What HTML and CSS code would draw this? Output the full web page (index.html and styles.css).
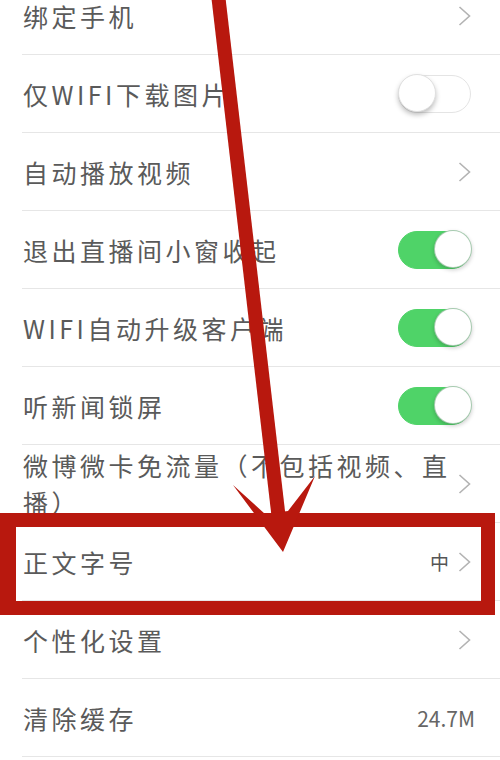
FILE: index.html
```html
<!DOCTYPE html>
<html lang="zh-CN">
<head>
<meta charset="utf-8">
<title>设置</title>
<link rel="stylesheet" href="styles.css">
</head>
<body>
<div class="screen">
  <ul class="list">
    <li class="row"><span class="label">绑定手机</span><svg class="chev" viewBox="0 0 13 20"><polyline points="1.5,1 11.5,10 1.5,19"/></svg></li>
    <li class="row"><span class="label">仅WIFI下载图片</span><span class="toggle"><span class="knob"></span></span></li>
    <li class="row"><span class="label">自动播放视频</span><svg class="chev" viewBox="0 0 13 20"><polyline points="1.5,1 11.5,10 1.5,19"/></svg></li>
    <li class="row"><span class="label">退出直播间小窗收起</span><span class="toggle on"><span class="knob"></span></span></li>
    <li class="row"><span class="label">WIFI自动升级客户端</span><span class="toggle on"><span class="knob"></span></span></li>
    <li class="row"><span class="label">听新闻锁屏</span><span class="toggle on"><span class="knob"></span></span></li>
    <li class="row"><span class="label wrap">微博微卡免流量（不包括视频、直播）</span><svg class="chev" viewBox="0 0 13 20"><polyline points="1.5,1 11.5,10 1.5,19"/></svg></li>
    <li class="row"><span class="label">正文字号</span><span class="value">中</span><svg class="chev" viewBox="0 0 13 20"><polyline points="1.5,1 11.5,10 1.5,19"/></svg></li>
    <li class="row"><span class="label">个性化设置</span><svg class="chev" viewBox="0 0 13 20"><polyline points="1.5,1 11.5,10 1.5,19"/></svg></li>
    <li class="row"><span class="label">清除缓存</span><span class="value size">24.7M</span></li>
  </ul>
  <div class="highlight"></div>
  <svg class="arrow" viewBox="0 0 500 760">
    <line x1="218" y1="-6" x2="279" y2="520"/>
    <polygon points="283,552 233,485 265,514 288,511 315,476"/>
  </svg>
</div>
</body>
</html>
```

FILE: styles.css
```css
html, body {
  margin: 0;
  padding: 0;
  background: #ffffff;
}

.screen {
  position: relative;
  width: 500px;
  height: 760px;
  overflow: hidden;
  background: #ffffff;
  font-family: "Noto Sans CJK SC", "Noto Sans", sans-serif;
}

.list {
  list-style: none;
  margin: -23px 0 0 0;
  padding: 0;
}

.row {
  box-sizing: border-box;
  height: 78px;
  margin-left: 22px;
  padding: 0 29px 0 1px;
  display: flex;
  align-items: center;
  border-bottom: 1px solid #e6e6e6;
}

.label {
  flex: 1;
  min-width: 0;
  font-size: 25px;
  letter-spacing: 3.5px;
  line-height: 28px;
  color: #5a5a5a;
  white-space: nowrap;
}

.label.wrap {
  white-space: normal;
  line-height: 37px;
  padding-right: 4px;
}

.value {
  font-size: 19px;
  color: #555555;
  margin-right: 9px;
}

.value.size {
  font-size: 21px;
  color: #666666;
  margin-right: -4px;
}

.chev {
  width: 13px;
  height: 20px;
  flex: none;
}

.chev polyline {
  fill: none;
  stroke: #b3b3b3;
  stroke-width: 1.6;
}

.toggle {
  position: relative;
  flex: none;
  box-sizing: border-box;
  width: 73px;
  height: 38px;
  border-radius: 19px;
  background: #ffffff;
  border: 1.5px solid #e4e4e4;
}

.toggle .knob {
  position: absolute;
  left: -1.5px;
  top: -1.5px;
  width: 38px;
  height: 38px;
  box-sizing: border-box;
  border-radius: 50%;
  background: #ffffff;
  border: 1px solid #e0e0e0;
  box-shadow: 0 3px 5px rgba(0, 0, 0, 0.25);
}

.toggle.on {
  background: #4fd368;
  border-color: #4fd368;
}

.toggle.on .knob {
  left: auto;
  right: -1.5px;
  border-color: rgba(60, 140, 80, 0.45);
  box-shadow: 0 2px 4px rgba(0, 0, 0, 0.2);
}

.highlight {
  position: absolute;
  left: 0;
  top: 513px;
  width: 495px;
  height: 102px;
  box-sizing: border-box;
  border: 14px solid #b8180e;
  border-left-width: 16px;
}

.arrow {
  position: absolute;
  left: 0;
  top: 0;
  width: 500px;
  height: 760px;
  pointer-events: none;
}

.arrow line {
  stroke: #b8180e;
  stroke-width: 14;
}

.arrow polygon {
  fill: #b8180e;
}
```
